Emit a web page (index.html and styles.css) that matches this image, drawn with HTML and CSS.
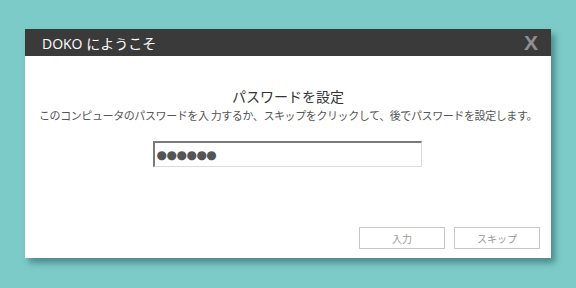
FILE: index.html
```html
<!DOCTYPE html>
<html lang="ja">
<head>
    <meta charset="UTF-8">
    <title>DOKO にようこそ</title>
    <link rel="stylesheet" href="styles.css">
</head>
<body>
    <div class="dialog">
        <header class="titlebar">
            <span class="title">DOKO にようこそ</span>
            <span class="close">X</span>
        </header>
        <main class="content">
            <h1>パスワードを設定</h1>
            <p class="desc">このコンピュータのパスワードを入 力するか、スキップをクリックして、後でパスワードを設定します。</p>
            <div class="field"><span class="dots">●●●●●●</span></div>
        </main>
        <footer class="actions">
            <button class="btn">入力</button>
            <button class="btn">スキップ</button>
        </footer>
    </div>
</body>
</html>
```

FILE: styles.css
```css
html, body {
    margin: 0;
    padding: 0;
}

body {
    width: 576px;
    height: 288px;
    background: #7ccbc8;
    font-family: "Noto Sans CJK JP", "Liberation Sans", sans-serif;
    padding: 29px 0 0 25px;
    box-sizing: border-box;
}

.dialog {
    width: 526px;
    height: 229px;
    background: #ffffff;
    box-shadow: 4px 5px 6px rgba(40, 90, 88, 0.55);
    display: flex;
    flex-direction: column;
}

.titlebar {
    height: 27px;
    background: #3a3a3a;
    display: flex;
    align-items: center;
    justify-content: space-between;
    padding: 0 13px 0 17px;
}

.title {
    color: #ffffff;
    font-size: 14px;
    font-family: "Open Sans", "Noto Sans CJK JP", sans-serif;
}

.close {
    color: #8f8f8f;
    font-size: 21px;
    font-weight: bold;
    font-family: "Liberation Sans", sans-serif;
}

.content {
    flex: 1;
    display: flex;
    flex-direction: column;
    align-items: center;
}

.content h1 {
    margin: 30px 0 0 0;
    font-size: 14px;
    font-weight: normal;
    color: #333333;
    line-height: 20px;
}

.desc {
    margin: 1px 0 0 0;
    font-size: 11px;
    letter-spacing: -0.4px;
    color: #555555;
    line-height: 16px;
}

.field {
    margin-top: 18px;
    width: 264px;
    height: 23px;
    border-style: solid;
    border-width: 2px 1px 1px 2px;
    border-color: #7a7a7a #dcdcdc #dcdcdc #7a7a7a;
    display: flex;
    align-items: center;
    padding-left: 2px;
    box-sizing: content-box;
    margin-left: -2px;
}

.dots {
    color: #555555;
    font-size: 12px;
    letter-spacing: -0.5px;
    font-family: "DejaVu Sans", sans-serif;
}

.actions {
    display: flex;
    justify-content: flex-end;
    gap: 9px;
    padding: 0 11px 9px 0;
}

.btn {
    width: 86px;
    height: 22px;
    background: #ffffff;
    border: 1px solid #c8c8c8;
    color: #999999;
    font-size: 10px;
    font-family: "Noto Sans CJK JP", sans-serif;
    padding: 0;
}
```
